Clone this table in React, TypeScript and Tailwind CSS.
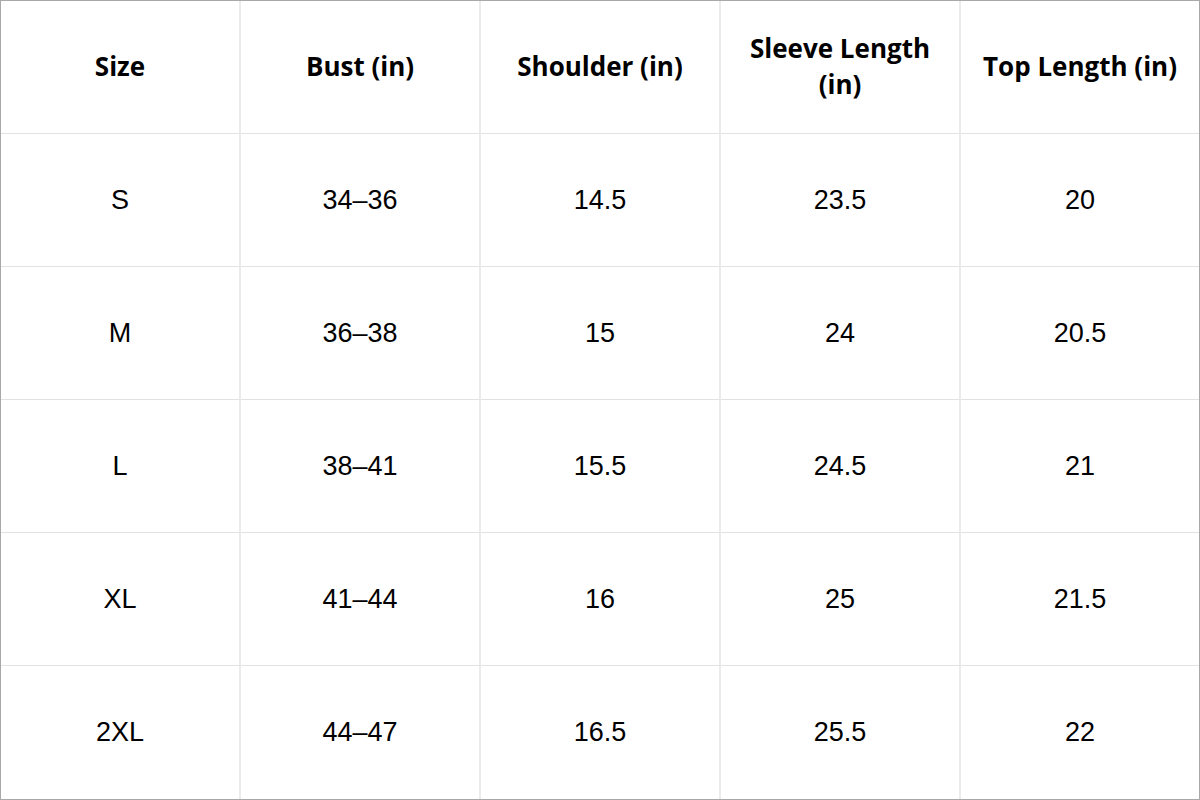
import React from "react";

const headers: React.ReactNode[] = [
  "Size",
  "Bust (in)",
  "Shoulder (in)",
  <>
    Sleeve Length
    <br />
    (in)
  </>,
  "Top Length (in)",
];

const rows: string[][] = [
  ["S", "34–36", "14.5", "23.5", "20"],
  ["M", "36–38", "15", "24", "20.5"],
  ["L", "38–41", "15.5", "24.5", "21"],
  ["XL", "41–44", "16", "25", "21.5"],
  ["2XL", "44–47", "16.5", "25.5", "22"],
];

const App: React.FC = () => {
  return (
    <div className="w-[1200px] h-[800px] bg-white border border-[#a8a8a8] grid grid-cols-[240px_240px_240px_240px_1fr] grid-rows-6 text-black">
      {headers.map((h, i) => (
        <div
          key={i}
          className={`flex items-center justify-center text-center px-1 pb-[2px] border-b border-[#e2e2e2] ${
            i < 4 ? "border-r-2 border-r-[#ebebeb]" : ""
          } font-['Open_Sans',sans-serif] font-bold text-[26px] leading-[36px]`}
        >
          {h}
        </div>
      ))}

      {rows.map((row, r) =>
        row.map((cell, c) => (
          <div
            key={`${r}-${c}`}
            className={`flex items-center justify-center text-center ${
              r < rows.length - 1 ? "border-b border-[#e2e2e2]" : ""
            } ${
              c < 4 ? "border-r-2 border-r-[#ebebeb]" : ""
            } font-['Liberation_Sans',sans-serif] text-[27px]`}
          >
            {cell}
          </div>
        ))
      )}
    </div>
  );
};

export default App;
